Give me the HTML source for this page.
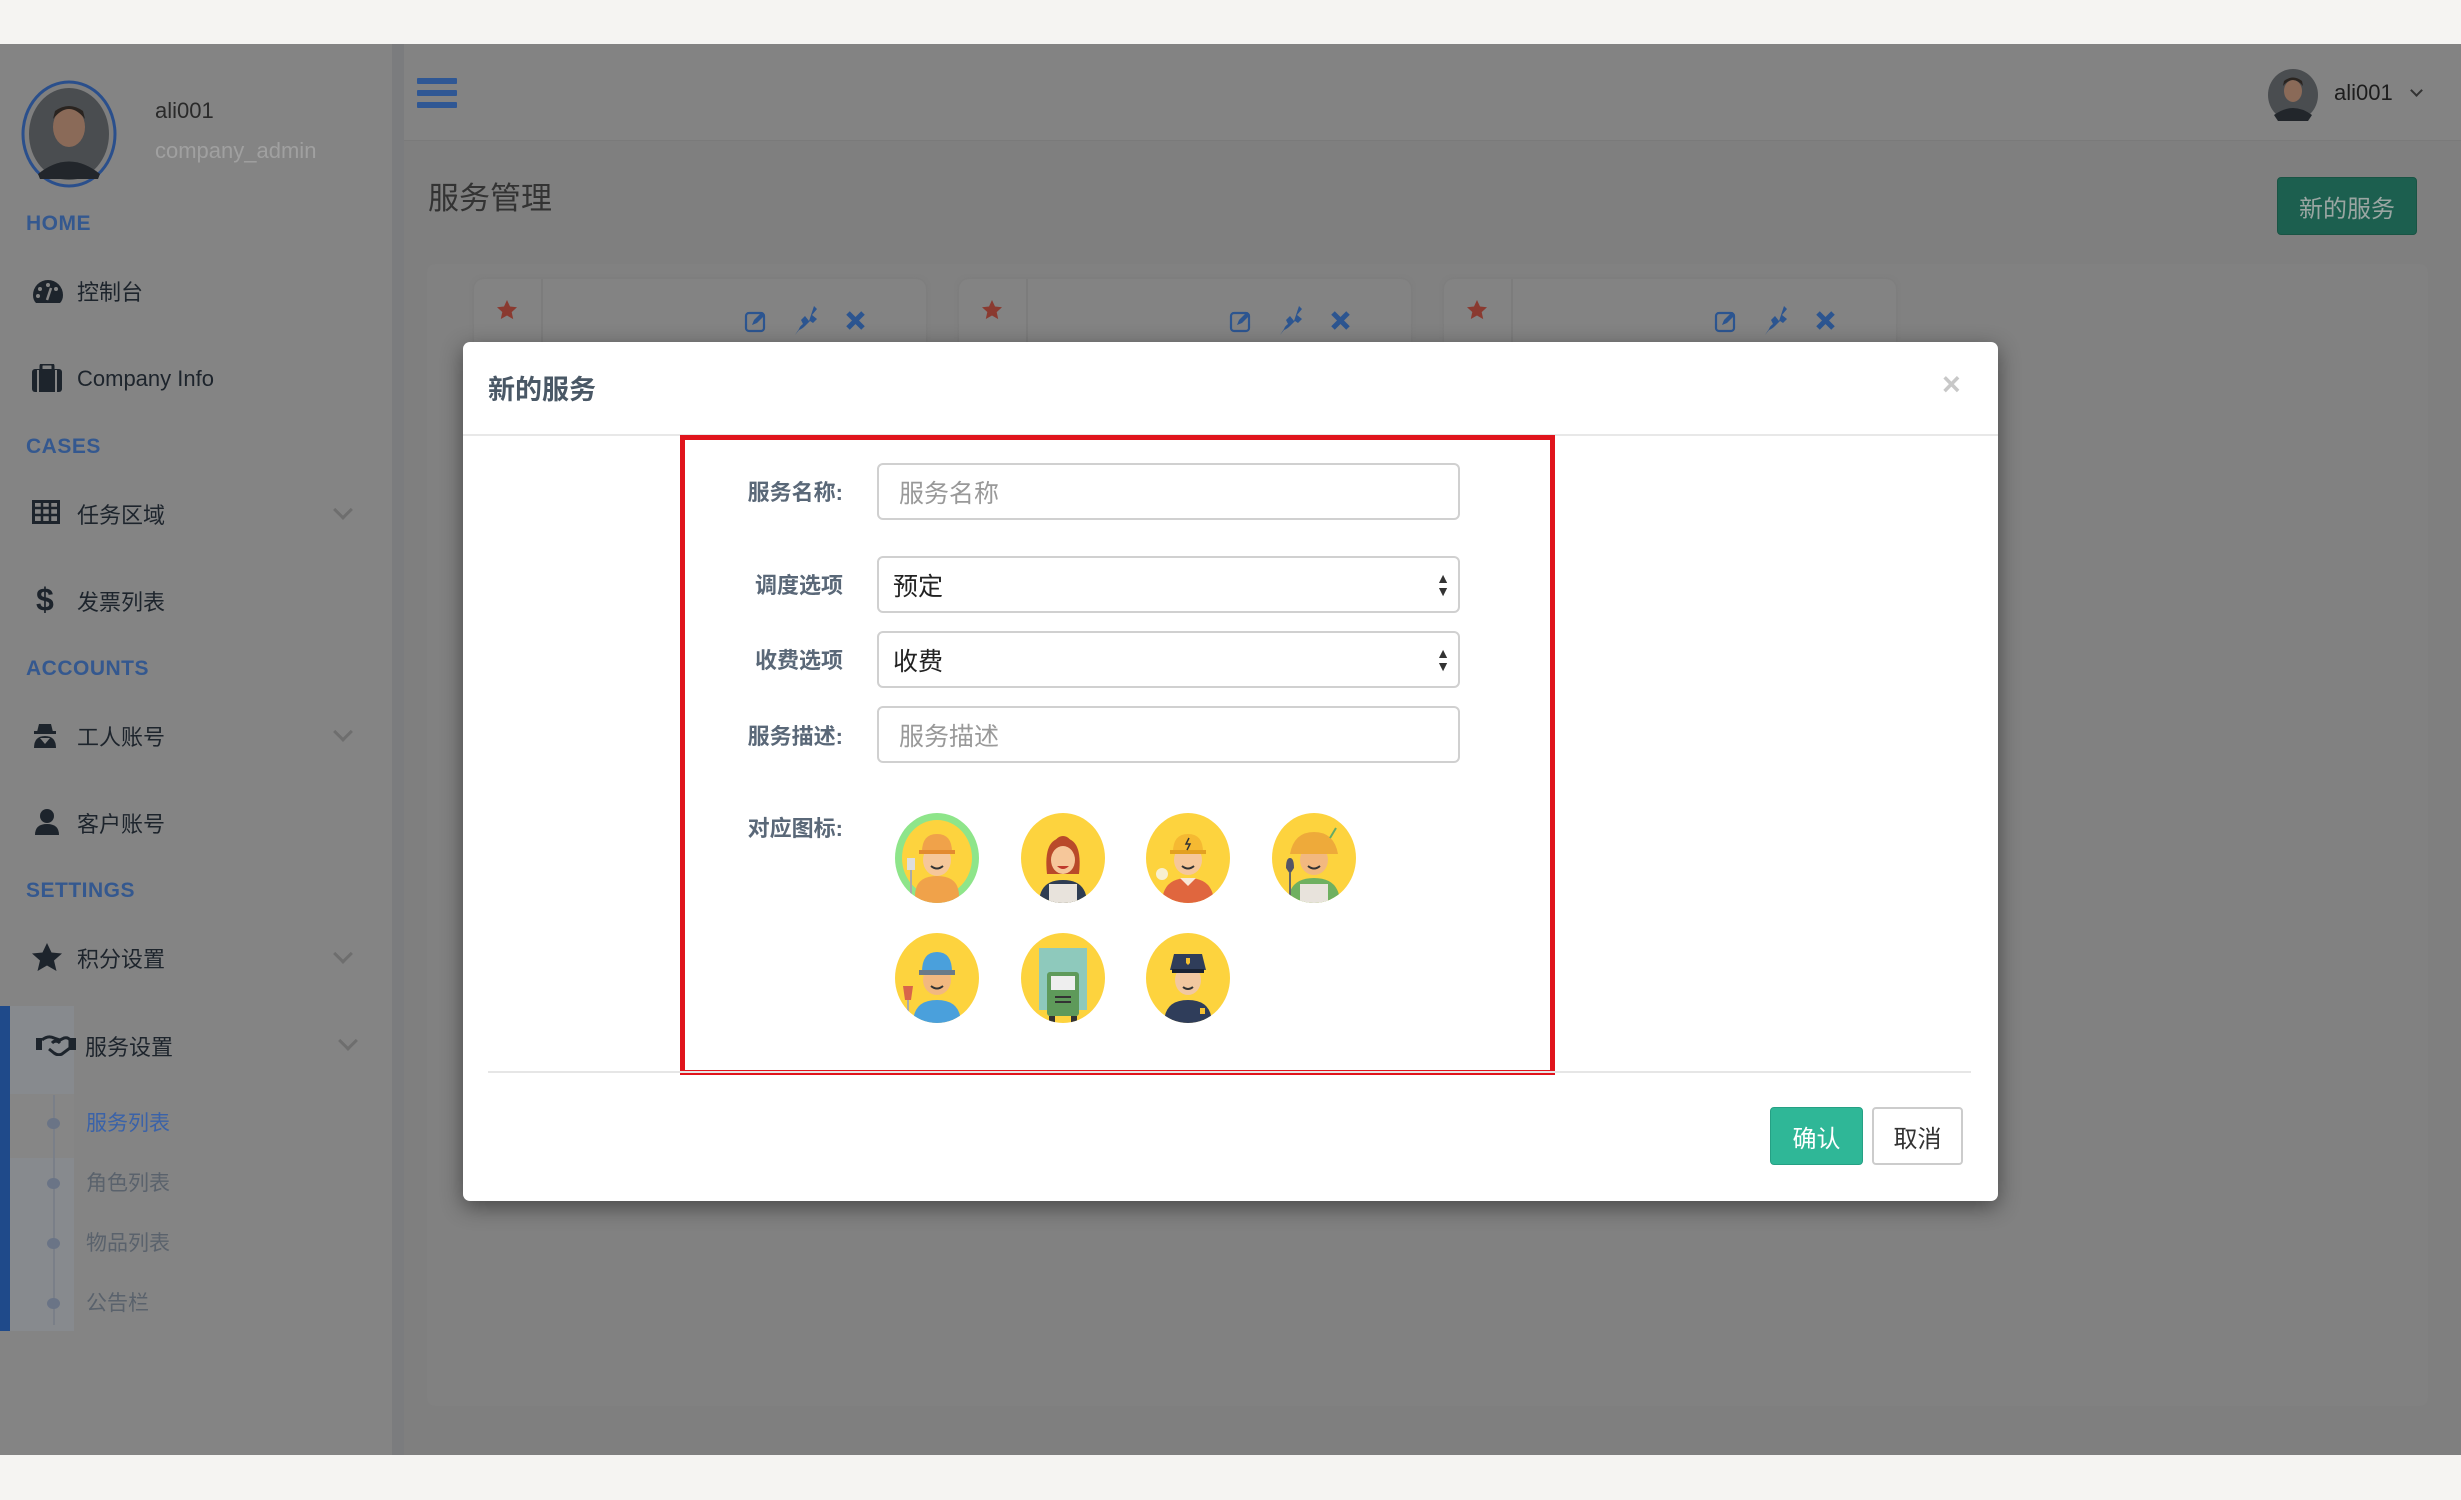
<!DOCTYPE html>
<html><head><meta charset="utf-8"><style>
*{margin:0;padding:0;box-sizing:border-box}
body{width:2461px;height:1500px;position:relative;overflow:hidden;background:#f5f4f2;font-family:"Liberation Sans","Noto Sans CJK SC",sans-serif}
.a{position:absolute}
.sb{left:0;top:44px;width:392px;height:1411px;background:#848484}
.band{left:392px;top:44px;width:12px;height:1411px;background:#7b7c7e}
.hdr{left:404px;top:44px;width:2057px;height:97px;background:#838383;border-bottom:1px solid #7a7a7a}
.main{left:404px;top:141px;width:2057px;height:1314px;background:#7f7f7f}
.sec{left:26px;font-weight:bold;font-size:21px;color:#34588f;letter-spacing:.5px}
.it{left:77px;font-size:22px;color:#1d242c;transform:translateY(-50%)}
.ic{left:32px;transform:translateY(-50%)}
.chev{left:336px;width:14px;height:14px;border-right:3px solid #6e6e6e;border-bottom:3px solid #6e6e6e;transform:rotate(45deg)}
.sub{left:86px;font-size:21px;color:#5a626c;transform:translateY(-50%)}
.dot{left:47px;width:13px;height:11px;border-radius:50%;background:#6a7486}
.card{width:452px;height:80px;top:279px;background:#838383;border-radius:10px;box-shadow:0 0 4px #7a7a7a}
.lbl{right:1618px;font-size:22px;font-weight:bold;color:#5a6878;transform:translateY(-50%);text-align:right}
.inp{left:877px;width:583px;border:2px solid #d0d0d0;border-radius:6px;background:#fff;font-size:25px;padding-left:20px;display:flex;align-items:center}
.arr{position:absolute;right:8px;top:50%;transform:translateY(-50%);font-size:14px;line-height:13px;color:#333}
</style></head><body>
<div class="a" style="left:0;top:0;width:2461px;height:44px;background:#f5f4f2"></div>
<div class="a sb"></div><div class="a band"></div><div class="a hdr"></div><div class="a main"></div>

<!-- sidebar -->
<svg class="a" style="left:20px;top:79px" width="98" height="110"><ellipse cx="49" cy="55" rx="46" ry="52" fill="#7f7f7f" stroke="#2a4f8c" stroke-width="3"/><ellipse cx="49" cy="55" rx="40" ry="46" fill="#4a4d50"/><ellipse cx="49" cy="48" rx="16" ry="20" fill="#8a6a58"/><path d="M33 40 Q49 20 65 40 L63 32 Q49 22 35 32Z" fill="#2a2420"/><path d="M18 95 Q49 70 80 95 L78 100 L20 100Z" fill="#22262b"/></svg>
<div class="a" style="left:155px;top:98px;font-size:22px;color:#2a2a2a">ali001</div>
<div class="a" style="left:155px;top:138px;font-size:22px;color:#a0a0a0">company_admin</div>

<div class="a sec" style="top:212px">HOME</div>
<svg class="a ic" style="top:291px" width="32" height="26" viewBox="0 0 32 26"><path d="M16 2A15 15 0 0 0 1 17q0 5 3 8h24q3-3 3-8A15 15 0 0 0 16 2z" fill="#1d242c"/><circle cx="16" cy="7" r="2" fill="#858585"/><circle cx="8" cy="11" r="2" fill="#858585"/><circle cx="24" cy="11" r="2" fill="#858585"/><circle cx="6" cy="18" r="2" fill="#858585"/><path d="M15 22l4-12" stroke="#858585" stroke-width="2.5"/></svg>
<div class="a it" style="top:291px">控制台</div>
<svg class="a ic" style="top:378px" width="30" height="28" viewBox="0 0 30 28"><rect x="0" y="5" width="30" height="23" rx="3" fill="#1d242c"/><rect x="9" y="0" width="12" height="7" rx="2" fill="none" stroke="#1d242c" stroke-width="3"/><rect x="5" y="6" width="2" height="22" fill="#858585"/><rect x="23" y="6" width="2" height="22" fill="#858585"/></svg>
<div class="a it" style="top:379px">Company Info</div>

<div class="a sec" style="top:435px">CASES</div>
<svg class="a ic" style="top:512px" width="28" height="24" viewBox="0 0 28 24"><rect x="1.5" y="1.5" width="25" height="21" fill="none" stroke="#1d242c" stroke-width="3"/><path d="M1 8h26M1 15h26M10 1v22M18 1v22" stroke="#1d242c" stroke-width="2.5"/></svg>
<div class="a it" style="top:514px">任务区域</div>
<div class="a chev" style="top:503px"></div>
<div class="a ic" style="top:600px;left:36px;font-size:32px;font-weight:bold;color:#1d242c">$</div>
<div class="a it" style="top:601px">发票列表</div>

<div class="a sec" style="top:657px">ACCOUNTS</div>
<svg class="a ic" style="top:735px" width="26" height="26" viewBox="0 0 26 26"><path d="M7 2h12l2 8H5z" fill="#1d242c"/><rect x="2" y="9" width="22" height="3" fill="#1d242c"/><path d="M2 26q0-12 11-12t11 12z" fill="#1d242c"/><path d="M8 16h10l-5 6z" fill="#858585"/></svg>
<div class="a it" style="top:736px">工人账号</div>
<div class="a chev" style="top:725px"></div>
<svg class="a ic" style="top:822px;left:35px" width="24" height="26" viewBox="0 0 24 26"><ellipse cx="12" cy="7" rx="7" ry="7" fill="#1d242c"/><path d="M0 26q0-11 12-11t12 11z" fill="#1d242c"/></svg>
<div class="a it" style="top:823px">客户账号</div>

<div class="a sec" style="top:879px">SETTINGS</div>
<svg class="a ic" style="top:957px" width="30" height="28" viewBox="0 0 30 28"><path d="M15 0l4.5 9.5 10.5 1-8 7 2.5 10.5L15 22.5 5.5 28 8 17.5 0 10.5l10.5-1z" fill="#1d242c"/></svg>
<div class="a it" style="top:958px">积分设置</div>
<div class="a chev" style="top:947px"></div>

<div class="a" style="left:0;top:1006px;width:10px;height:325px;background:#1f4a8a"></div>
<div class="a" style="left:10px;top:1006px;width:64px;height:325px;background:#878a8e"></div>
<div class="a" style="left:10px;top:1094px;width:64px;height:64px;background:#868686"></div>
<svg class="a ic" style="top:1045px;left:36px" width="40" height="22" viewBox="0 0 40 22"><rect x="0" y="4" width="6" height="12" fill="#1d242c"/><rect x="34" y="4" width="6" height="12" fill="#1d242c"/><path d="M6 6q6-5 12-2l6 2 4-2q4-1 6 2v8l-8 6q-4 2-8-1l-5-4" fill="none" stroke="#1d242c" stroke-width="3"/><path d="M16 9q4-4 8 0" fill="none" stroke="#1d242c" stroke-width="3"/></svg>
<div class="a it" style="top:1046px;left:85px;font-size:22px">服务设置</div>
<div class="a chev" style="top:1034px;left:341px"></div>
<div class="a" style="left:53px;top:1095px;width:2px;height:230px;background:#7a7f88"></div>
<div class="a dot" style="top:1118px"></div><div class="a sub" style="top:1122px;color:#3a62a8">服务列表</div>
<div class="a dot" style="top:1178px"></div><div class="a sub" style="top:1182px">角色列表</div>
<div class="a dot" style="top:1238px"></div><div class="a sub" style="top:1242px">物品列表</div>
<div class="a dot" style="top:1298px"></div><div class="a sub" style="top:1302px">公告栏</div>

<!-- header -->
<svg class="a" style="left:417px;top:78px" width="40" height="30"><rect y="0" width="40" height="6" rx="1" fill="#2f5794"/><rect y="12" width="40" height="6" rx="1" fill="#2f5794"/><rect y="24" width="40" height="6" rx="1" fill="#2f5794"/></svg>
<svg class="a" style="left:2268px;top:69px" width="50" height="52"><ellipse cx="25" cy="26" rx="25" ry="26" fill="#4a4d50"/><ellipse cx="25" cy="22" rx="9" ry="11" fill="#8a6a58"/><path d="M15 17q10-12 20 0l-1-5q-9-7-18 0z" fill="#2a2420"/><path d="M6 46q19-14 38 0l-4 6H10z" fill="#22262b"/></svg>
<div class="a" style="left:2334px;top:80px;font-size:22px;color:#1d1d1d">ali001</div>
<div class="a" style="left:2412px;top:86px;width:9px;height:9px;border-right:2px solid #333;border-bottom:2px solid #333;transform:rotate(45deg)"></div>

<div class="a" style="left:428px;top:173px;font-size:31px;color:#333">服务管理</div>
<div class="a" style="left:2277px;top:177px;width:140px;height:58px;background:#1c5f4f;border:1px solid #195444;border-radius:4px;color:#9aa6a2;font-size:24px;display:flex;align-items:center;justify-content:center">新的服务</div>

<div class="a" style="left:427px;top:264px;width:2001px;height:1142px;background:#818181;border-radius:8px"></div>
<!-- cards -->
<div class="a card" style="left:474px"></div><div class="a card" style="left:959px"></div><div class="a card" style="left:1444px"></div>
<div class="a" style="left:541px;top:279px;width:2px;height:70px;background:#7c7c7c"></div>
<div class="a" style="left:1026px;top:279px;width:2px;height:70px;background:#7c7c7c"></div>
<div class="a" style="left:1511px;top:279px;width:2px;height:70px;background:#7c7c7c"></div>
<svg width="0" height="0" style="position:absolute"><defs>
<g id="cicons"><path d="M10 0l3 6.5 7 .8-5.3 4.8 1.5 7L10 15.5 3.8 19l1.5-7L0 7.3l7-.8z" fill="#8a3a30"/>
<g transform="translate(248 10)"><rect x="1" y="3" width="18" height="18" rx="3" fill="none" stroke="#2c5590" stroke-width="2.2"/><path d="M7 15l2-5 8-8 3 3-8 8z" fill="#2c5590"/></g>
<g transform="translate(298 6)" fill="#2c5590"><path d="M19 0l3 3-5 6 5 4-4 4-3-2-5 5q-3 3-6 4L0 29l4-6q1-3 4-5l-2-4 4-4 4 5z"/></g>
<g transform="translate(350 12)" stroke="#2c5590" stroke-width="5"><path d="M1 1l15 15M16 1L1 16"/></g></g></defs></svg>
<svg class="a" style="left:497px;top:300px" width="380" height="45"><use href="#cicons"/></svg>
<svg class="a" style="left:982px;top:300px" width="380" height="45"><use href="#cicons"/></svg>
<svg class="a" style="left:1467px;top:300px" width="380" height="45"><use href="#cicons"/></svg>

<!-- modal -->
<div class="a" style="left:463px;top:342px;width:1535px;height:859px;background:#fff;border-radius:7px;box-shadow:0 6px 22px rgba(0,0,0,.45)"></div>
<div class="a" style="left:488px;top:368px;font-size:27px;font-weight:bold;color:#4a5866">新的服务</div>
<div class="a" style="left:1942px;top:366px;font-size:32px;font-weight:bold;color:#c8c8c8">×</div>
<div class="a" style="left:463px;top:434px;width:1535px;height:2px;background:#e8e8e8"></div>
<div class="a" style="left:680px;top:435px;width:875px;height:640px;border:5px solid #e0141c"></div>

<div class="a lbl" style="top:491px">服务名称:</div>
<div class="a inp" style="top:463px;height:57px;color:#999">服务名称</div>
<div class="a lbl" style="top:584px">调度选项</div>
<div class="a inp" style="top:556px;height:57px;color:#222;padding-left:14px">预定<div class="arr">▲<br>▼</div></div>
<div class="a lbl" style="top:659px">收费选项</div>
<div class="a inp" style="top:631px;height:57px;color:#222;padding-left:14px">收费<div class="arr">▲<br>▼</div></div>
<div class="a lbl" style="top:735px">服务描述:</div>
<div class="a inp" style="top:706px;height:57px;color:#999">服务描述</div>
<div class="a lbl" style="top:827px">对应图标:</div>

<svg class="a" style="left:880px;top:810px" width="500" height="220" viewBox="0 0 500 220">
<defs><clipPath id="c"><ellipse cx="0" cy="0" rx="42" ry="45"/></clipPath></defs>
<g transform="translate(57 48)"><ellipse rx="42" ry="45" fill="#8ee58a"/><ellipse rx="35" ry="38" fill="#fdd33e"/>
<g clip-path="url(#c)"><path d="M-22 38q0-20 22-20t22 20v10h-44z" fill="#f0a24a"/><ellipse cx="0" cy="2" rx="14" ry="16" fill="#f6c79a"/><path d="M-15 -6q0-18 15-18t15 18z" fill="#f0a24a"/><rect x="-18" y="-8" width="36" height="4" fill="#e38a2f"/><path d="M-6 8q6 5 12 0" stroke="#333" stroke-width="2" fill="none"/><rect x="-30" y="0" width="8" height="12" fill="#ddd"/><rect x="-27" y="12" width="2" height="28" fill="#aaa"/></g></g>
<g transform="translate(183 48)"><ellipse rx="42" ry="45" fill="#fdd33e"/>
<g clip-path="url(#c)"><path d="M-16 16q-4-36 16-36t16 36z" fill="#b94a2a"/><path d="M-24 46q0-24 24-24t24 24z" fill="#2f3d52"/><rect x="-14" y="26" width="28" height="22" fill="#e8e3dc"/><ellipse cx="0" cy="2" rx="12" ry="14" fill="#f6c79a"/><path d="M-6 8q6 6 12 0z" fill="#c0392b"/><path d="M-12 -8q12-10 24 0q-4-14-12-14t-12 14z" fill="#b94a2a"/></g></g>
<g transform="translate(308 48)"><ellipse rx="42" ry="45" fill="#fdd33e"/>
<g clip-path="url(#c)"><path d="M-26 46q0-26 26-26t26 26z" fill="#e0663e"/><path d="M-8 20l8 8 8-8z" fill="#f8e8d8"/><ellipse cx="0" cy="2" rx="14" ry="15" fill="#f6c79a"/><path d="M-15 -6q0-18 15-18t15 18z" fill="#f5b932"/><rect x="-18" y="-8" width="36" height="4" fill="#e3a020"/><path d="M1 -20l-3 6h4l-3 6" stroke="#333" stroke-width="1.5" fill="none"/><path d="M-6 8q6 5 12 0" stroke="#333" stroke-width="2" fill="none"/><circle cx="-26" cy="16" r="6" fill="#f8f0d0"/></g></g>
<g transform="translate(434 48)"><ellipse rx="42" ry="45" fill="#fdd33e"/>
<g clip-path="url(#c)"><path d="M-26 46q0-26 26-26t26 26z" fill="#6fb060"/><rect x="-14" y="26" width="28" height="22" fill="#e8e3dc"/><ellipse cx="0" cy="2" rx="14" ry="15" fill="#f2b880"/><path d="M-24 -4q4-22 24-22t24 22z" fill="#eeaa3a"/><path d="M-6 8q6 5 12 0" stroke="#333" stroke-width="2" fill="none"/><path d="M-28 10q0-10 4-10t4 10l-4 6z" fill="#556"/><rect x="-25" y="14" width="2" height="30" fill="#666"/><path d="M16 -20l6-10" stroke="#6a6" stroke-width="2"/></g></g>
<g transform="translate(57 168)"><ellipse rx="42" ry="45" fill="#fdd33e"/>
<g clip-path="url(#c)"><path d="M-24 46q0-24 24-24t24 24z" fill="#4aa0dc"/><ellipse cx="0" cy="2" rx="14" ry="15" fill="#f2b880"/><path d="M-15 -6q0-20 15-20t15 20z" fill="#4aa0dc"/><rect x="-18" y="-8" width="36" height="5" fill="#6a7a88"/><path d="M-6 8q6 5 12 0" stroke="#333" stroke-width="2" fill="none"/><path d="M-34 8h10l-2 14h-6z" fill="#d8654a"/><rect x="-30" y="22" width="2" height="24" fill="#aaa"/></g></g>
<g transform="translate(183 168)"><ellipse rx="42" ry="45" fill="#fdd33e"/>
<g clip-path="url(#c)"><rect x="-24" y="-30" width="48" height="62" fill="#8ec9bc"/><rect x="-16" y="-6" width="32" height="44" rx="3" fill="#5e9a5a"/><rect x="-12" y="-2" width="24" height="14" fill="#eee"/><rect x="-8" y="18" width="16" height="2" fill="#333"/><rect x="-8" y="23" width="16" height="2" fill="#333"/><rect x="-14" y="38" width="6" height="10" fill="#333"/><rect x="8" y="38" width="6" height="10" fill="#333"/></g></g>
<g transform="translate(308 168)"><ellipse rx="42" ry="45" fill="#fdd33e"/>
<g clip-path="url(#c)"><path d="M-24 46q0-24 24-24t24 24z" fill="#2f3d5a"/><ellipse cx="0" cy="2" rx="13" ry="15" fill="#f2c8a0"/><path d="M-18 -8l4-16h28l4 16z" fill="#2f3d5a"/><rect x="-16" y="-9" width="32" height="4" fill="#1a2333"/><path d="M-2 -20h4v5l-2 2-2-2z" fill="#f5c030"/><path d="M-5 9q5 4 10 0" stroke="#333" stroke-width="2" fill="none"/><path d="M12 30h5v6h-5z" fill="#f5c030"/></g></g>
</svg>

<div class="a" style="left:488px;top:1071px;width:1483px;height:2px;background:#e6e6e6"></div>
<div class="a" style="left:1770px;top:1107px;width:93px;height:58px;background:#2fb797;border:1px solid #26a084;border-radius:4px;color:#fff;font-size:24px;display:flex;align-items:center;justify-content:center">确认</div>
<div class="a" style="left:1872px;top:1107px;width:91px;height:58px;background:#fff;border:2px solid #ccc;border-radius:4px;color:#333;font-size:24px;display:flex;align-items:center;justify-content:center">取消</div>

<div class="a" style="left:0;top:1455px;width:2461px;height:45px;background:#f5f4f2"></div>
</body></html>
